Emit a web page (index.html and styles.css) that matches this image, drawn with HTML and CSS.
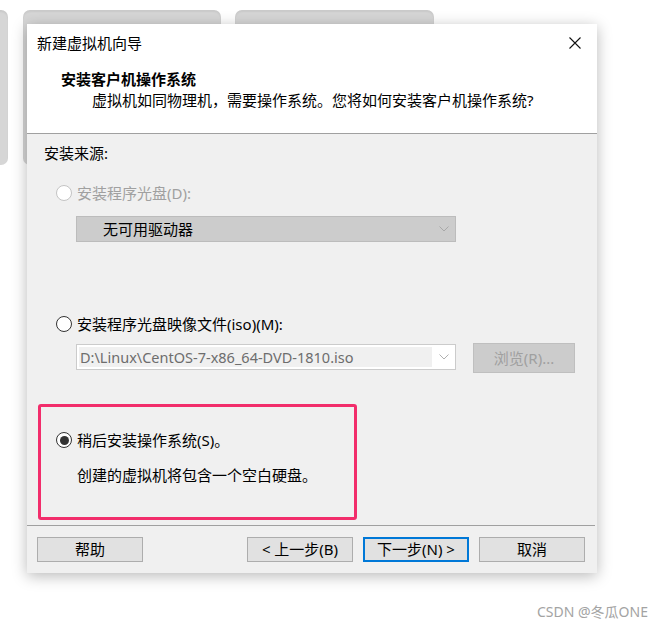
FILE: index.html
```html
<!DOCTYPE html>
<html lang="zh-CN">
<head>
<meta charset="utf-8">
<title>新建虚拟机向导</title>
<link rel="stylesheet" href="styles.css">
</head>
<body>
<div class="desktop">
  <div class="bg-tab strip"></div>
  <div class="bg-tab tab1"></div>
  <div class="bg-tab tab2"></div>

  <div class="dialog">
    <div class="header">
      <div class="titlebar">
        <span class="wtitle">新建虚拟机向导</span>
        <svg class="close" width="12" height="12" viewBox="0 0 12 12"><path d="M0.5 0.5 L11.5 11.5 M11.5 0.5 L0.5 11.5" stroke="#111" stroke-width="1.1" fill="none"/></svg>
      </div>
      <div class="htitle">安装客户机操作系统</div>
      <div class="hsub">虚拟机如同物理机，需要操作系统。您将如何安装客户机操作系统?</div>
    </div>

    <div class="body">
      <div class="label">安装来源:</div>

      <div class="radio-row disabled row1">
        <span class="radio"></span>
        <span>安装程序光盘(D):</span>
      </div>
      <div class="select">
        <span>无可用驱动器</span>
        <svg class="chev" width="10" height="6" viewBox="0 0 10 6"><polyline points="0.5,0.5 5,5 9.5,0.5" fill="none" stroke="#a8a8a8" stroke-width="1"/></svg>
      </div>

      <div class="radio-row row2">
        <span class="radio"></span>
        <span>安装程序光盘映像文件(iso)(M):</span>
      </div>
      <div class="iso-row">
        <div class="combo">
          <span class="combo-field">D:\Linux\CentOS-7-x86_64-DVD-1810.iso</span>
          <svg class="chev" width="10" height="6" viewBox="0 0 10 6"><polyline points="0.5,0.5 5,5 9.5,0.5" fill="none" stroke="#b0b0b0" stroke-width="1"/></svg>
        </div>
        <div class="browse">浏览(R)...</div>
      </div>

      <div class="mark">
        <div class="radio-row row3">
          <span class="radio checked"></span>
          <span>稍后安装操作系统(S)。</span>
        </div>
        <div class="note">创建的虚拟机将包含一个空白硬盘。</div>
      </div>

      <div class="sep"></div>

      <div class="buttons">
        <div class="btn help">帮助</div>
        <div class="btn back">&lt; 上一步(B)</div>
        <div class="btn next">下一步(N) &gt;</div>
        <div class="btn cancel">取消</div>
      </div>
    </div>
  </div>

  <div class="watermark">CSDN @冬瓜ONE</div>
</div>
</body>
</html>
```

FILE: styles.css
```css
html, body {
  margin: 0;
  padding: 0;
  background: #ffffff;
}

body {
  font-family: "Noto Sans", "Noto Sans CJK SC", sans-serif;
  font-size: 15px;
  color: #000;
}

.desktop {
  position: relative;
  width: 664px;
  height: 628px;
  overflow: hidden;
  padding-top: 24px;
  box-sizing: border-box;
}

.bg-tab {
  position: absolute;
  top: 10px;
  height: 155px;
  background: #d6d6d6;
  border-radius: 7px;
  box-shadow: inset 0 2px 2px rgba(0,0,0,0.06);
}
.strip { left: -12px; width: 20px; }
.tab1 { left: 23px; width: 198px; }
.tab2 { left: 235px; width: 199px; }

.dialog {
  position: relative;
  z-index: 1;
  margin-left: 27px;
  width: 570px;
  height: 549px;
  background: #f0f0f0;
  box-shadow: 0 3px 14px rgba(0,0,0,0.28);
  display: flex;
  flex-direction: column;
}

.header {
  background: #fff;
  border-bottom: 1px solid #a0a0a0;
  height: 109px;
}

.titlebar {
  height: 38px;
  display: flex;
  align-items: center;
  justify-content: space-between;
  padding: 0 16px 0 10px;
}
.wtitle {
  font-size: 15px;
  line-height: 38px;
}
.close { display: block; margin-top: -1px; }

.htitle {
  margin-top: 7px;
  padding-left: 34px;
  font-weight: bold;
  line-height: 21px;
}
.hsub {
  padding-left: 65px;
  line-height: 21px;
}

.body {
  flex: 1;
  display: flex;
  flex-direction: column;
  padding-top: 9px;
}

.label {
  margin-left: 17px;
  line-height: 20px;
}

.radio-row {
  display: flex;
  align-items: center;
  gap: 5px;
  line-height: 20px;
  margin-left: 29px;
}
.radio-row.disabled { color: #a0a0a0; }
.row1 { margin-top: 20px; }
.row2 { margin-top: 72px; }

.radio {
  width: 14px;
  height: 14px;
  border: 1px solid #333;
  border-radius: 50%;
  background: #fff;
  flex: none;
  position: relative;
}
.disabled .radio {
  border-color: #c4c4c4;
}
.radio.checked::after {
  content: "";
  position: absolute;
  left: 2.5px;
  top: 2.5px;
  width: 9px;
  height: 9px;
  border-radius: 50%;
  background: #333;
}

.select {
  margin: 13px 0 0 49px;
  width: 380px;
  height: 26px;
  box-sizing: border-box;
  background: #cccccc;
  border: 1px solid #bcbcbc;
  display: flex;
  align-items: center;
  justify-content: space-between;
  padding: 0 6px 0 26px;
}
.select span { line-height: 24px; }

.iso-row {
  margin: 9px 0 0 49px;
  display: flex;
  align-items: flex-start;
  gap: 17px;
  height: 30px;
}
.combo {
  margin-top: 1px;
  width: 380px;
  height: 26px;
  box-sizing: border-box;
  background: #fff;
  border: 1px solid #cbcbcb;
  padding: 2px 6px 2px 2px;
  display: flex;
  align-items: center;
  justify-content: space-between;
}
.combo-field {
  width: 353px;
  height: 20px;
  background: #f0f0f0;
  color: #6d6d6d;
  font-size: 14.5px;
  line-height: 20px;
  padding-left: 1px;
  box-sizing: border-box;
  white-space: nowrap;
  overflow: hidden;
}
.browse {
  width: 102px;
  height: 30px;
  box-sizing: border-box;
  background: #cccccc;
  border: 1px solid #bfbfbf;
  color: #a0a0a0;
  text-align: center;
  line-height: 28px;
}

.mark {
  margin: 31px 0 0 11px;
  width: 319px;
  height: 116px;
  box-sizing: border-box;
  border: 3px solid #f22d6b;
  border-radius: 3px;
  padding-top: 23px;
}
.mark .radio-row { margin-left: 15px; }
.note {
  margin: 15px 0 0 36px;
  line-height: 20px;
}

.sep {
  margin: 5px 2px 0 0;
  height: 1px;
  background: #a0a0a0;
}

.buttons {
  margin-top: 11px;
  display: flex;
  padding: 0 12px 0 10px;
}
.btn {
  width: 106px;
  height: 25px;
  box-sizing: border-box;
  background: #e1e1e1;
  border: 1px solid #adadad;
  text-align: center;
  line-height: 23px;
}
.back { margin-left: auto; }
.next {
  margin-left: 10px;
  border: 2px solid #0078d7;
  line-height: 21px;
}
.cancel { margin-left: 10px; }

.watermark {
  position: absolute;
  left: 537px;
  top: 602px;
  font-size: 14px;
  line-height: 20px;
  color: #a3a3a3;
  white-space: nowrap;
}
```
